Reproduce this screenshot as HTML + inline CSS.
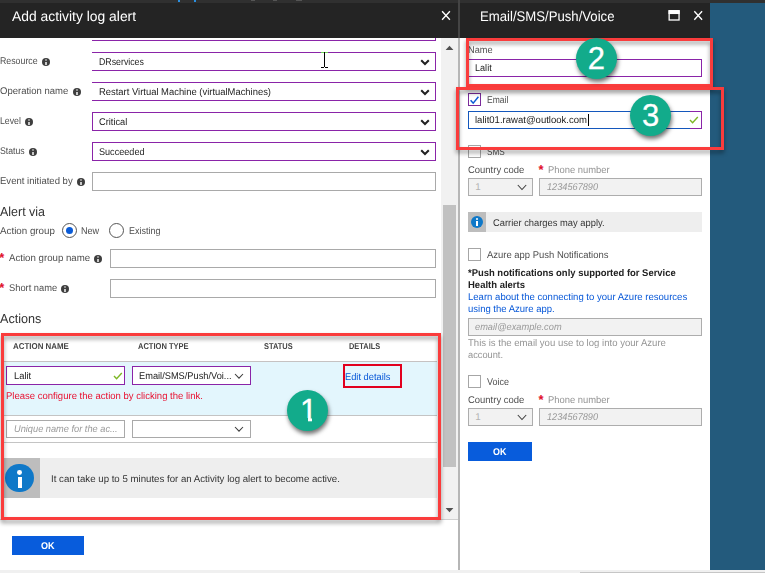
<!DOCTYPE html>
<html lang="en">
<head>
<meta charset="utf-8">
<title>Add activity log alert</title>
<style>
html,body{margin:0;padding:0;}
body{width:765px;height:573px;overflow:hidden;background:#fff;font-family:"Liberation Sans",sans-serif;font-size:10px;color:#333;position:relative;}
#root{position:absolute;left:0;top:0;width:765px;height:573px;overflow:hidden;background:#fff;}
.abs,.t,.box,.ln{position:absolute;}
.t{white-space:nowrap;color:#4e4e4e;transform-origin:0 0;text-rendering:geometricPrecision;}
.box{box-sizing:border-box;border:1px solid #a9a9a9;background:#fff;}
.pur{border-color:#8a24a8;}
.dis{background:#f2f2f2;border-color:#adadad;}
.ph{font-style:italic;color:#9a9a9a;}
.red{color:#e81030;}
.lnk{color:#0657d8;}
.b{font-weight:bold;}
.gray{color:#949494;}
.star{color:#e0102a;}
.cb{position:absolute;box-sizing:border-box;width:13px;height:13px;border:1px solid #a6a6a6;background:#fff;}
.circ{position:absolute;border-radius:50%;background:#12ab8b;box-shadow:1px 3px 4px rgba(0,0,0,.55);}
.num{position:absolute;left:0;width:100%;text-align:center;color:#fff;white-space:nowrap;-webkit-text-stroke:.3px #fff;}
.anno{position:absolute;box-sizing:border-box;border:3px solid #fa3c3c;filter:drop-shadow(0 3px 2px rgba(0,0,0,.4));}
.info{position:absolute;border-radius:50%;background:#3e3e3e;width:8px;height:8px;}
.info i{position:absolute;left:3.05px;width:1.9px;background:rgba(255,255,255,.72);display:block;}
.info i:first-child{background:rgba(255,255,255,.42);}
</style>
</head>
<body>
<div id="root">

<!-- top strip + headers -->
<div class="abs" style="left:0;top:0;width:765px;height:38px;background:#242424;"></div>
<div class="abs" style="left:0;top:0;width:765px;height:3px;background:#303030;"></div>
<div class="abs" style="left:710px;top:3px;width:55px;height:567px;background:#235a7c;"></div>
<div class="abs" style="left:458px;top:38px;width:2px;height:532px;background:#b6b6b6;"></div>
<div class="abs" style="left:458px;top:0;width:2px;height:38px;background:#444;"></div>

<!-- header icons -->
<svg class="abs" style="left:439px;top:8px;" width="14" height="15" viewBox="0 0 14 15"><path d="M3.1 3.3 L10.9 11.8 M10.9 3.3 L3.1 11.8" stroke="#fff" stroke-width="1.35" fill="none"/></svg>
<svg class="abs" style="left:691px;top:8px;" width="14" height="15" viewBox="0 0 14 15"><path d="M3.3 3.3 L11.1 11.8 M11.1 3.3 L3.3 11.8" stroke="#fff" stroke-width="1.35" fill="none"/></svg>
<svg class="abs" style="left:667px;top:9px;" width="15" height="14" viewBox="0 0 15 14"><rect x="2.15" y="1.8" width="9.9" height="9.2" fill="none" stroke="#fff" stroke-width="1.3"/><rect x="1.5" y="1.15" width="11.2" height="3.9" fill="#fff"/></svg>
<div class="abs" style="left:177.7px;top:0;width:2.6px;height:1.5px;background:#2a8fe0;"></div>
<div class="abs" style="left:193.6px;top:0;width:2.8px;height:1.5px;background:#2a8fe0;"></div>
<div class="abs" style="left:251px;top:0;width:4px;height:1.2px;background:#555;"></div>
<div class="abs" style="left:273px;top:0;width:4px;height:1.2px;background:#555;"></div>
<div class="abs" style="left:296px;top:0;width:6px;height:1.2px;background:#555;"></div>

<!-- LEFT PANEL scrollbar -->
<div class="abs" style="left:441px;top:38px;width:17px;height:481px;background:#f1f1f1;"></div>
<div class="abs" style="left:443px;top:205px;width:13px;height:262px;background:#c1c1c1;"></div>
<svg class="abs" style="left:445px;top:45px;" width="9" height="6" viewBox="0 0 9 6"><path d="M0.6 5 L4.5 0.8 L8.4 5 Z" fill="#505050"/></svg>
<svg class="abs" style="left:445px;top:506.9px;" width="9" height="6" viewBox="0 0 9 6"><path d="M0.6 1 L4.5 5.2 L8.4 1 Z" fill="#505050"/></svg>
<div class="abs" style="left:0;top:519px;width:458px;height:1px;background:#d0d0d0;"></div>

<!-- form rows -->
<div class="abs" style="left:92px;top:40px;width:344px;height:1px;background:#8a24a8;"></div>
<div class="abs" style="left:435px;top:38px;width:1px;height:3px;background:#8a24a8;"></div>

<div class="box pur" style="left:92px;top:52px;width:344px;height:19px;border-left:none;"></div>
<div class="box pur" style="left:92px;top:82px;width:344px;height:19px;border-left:none;"></div>
<div class="box pur" style="left:92px;top:112px;width:344px;height:19px;"></div>
<div class="box pur" style="left:92px;top:142px;width:344px;height:19px;"></div>
<div class="box" style="left:92px;top:172px;width:344px;height:19px;"></div>
<!-- bold chevrons -->
<svg class="abs" style="left:420px;top:59px;" width="10" height="7" viewBox="0 0 10 7"><path d="M1.2 1.2 L5 5 L8.8 1.2" stroke="#222" stroke-width="2" fill="none"/></svg>
<svg class="abs" style="left:420px;top:89px;" width="10" height="7" viewBox="0 0 10 7"><path d="M1.2 1.2 L5 5 L8.8 1.2" stroke="#222" stroke-width="2" fill="none"/></svg>
<svg class="abs" style="left:420px;top:119px;" width="10" height="7" viewBox="0 0 10 7"><path d="M1.2 1.2 L5 5 L8.8 1.2" stroke="#222" stroke-width="2" fill="none"/></svg>
<svg class="abs" style="left:420px;top:149px;" width="10" height="7" viewBox="0 0 10 7"><path d="M1.2 1.2 L5 5 L8.8 1.2" stroke="#222" stroke-width="2" fill="none"/></svg>
<!-- info icons -->
<div class="info" style="left:42.1px;top:58px;"><i style="top:1.2px;height:1.9px;"></i><i style="top:4.1px;height:2.5px;"></i></div>
<div class="info" style="left:73.1px;top:88px;"><i style="top:1.2px;height:1.9px;"></i><i style="top:4.1px;height:2.5px;"></i></div>
<div class="info" style="left:25.05px;top:118px;"><i style="top:1.2px;height:1.9px;"></i><i style="top:4.1px;height:2.5px;"></i></div>
<div class="info" style="left:29.1px;top:148px;"><i style="top:1.2px;height:1.9px;"></i><i style="top:4.1px;height:2.5px;"></i></div>
<div class="info" style="left:77.2px;top:178px;"><i style="top:1.2px;height:1.9px;"></i><i style="top:4.1px;height:2.5px;"></i></div>
<div class="info" style="left:94px;top:255px;"><i style="top:1.2px;height:1.9px;"></i><i style="top:4.1px;height:2.5px;"></i></div>
<div class="info" style="left:61.1px;top:285px;"><i style="top:1.2px;height:1.9px;"></i><i style="top:4.1px;height:2.5px;"></i></div>

<!-- radios -->
<div class="abs" style="left:61.8px;top:222.9px;width:15.2px;height:15.2px;box-sizing:border-box;border:1.2px solid #555;border-radius:50%;background:#fff;"></div>
<div class="abs" style="left:65.5px;top:226.6px;width:7.8px;height:7.8px;border-radius:50%;background:#0a5bd6;"></div>
<div class="abs" style="left:109.2px;top:222.9px;width:15.2px;height:15.2px;box-sizing:border-box;border:1.2px solid #555;border-radius:50%;background:#fff;"></div>

<div class="box" style="left:110px;top:249px;width:326px;height:18.5px;"></div>
<div class="box" style="left:110px;top:279px;width:326px;height:18.5px;"></div>

<!-- table -->
<div class="abs" style="left:4px;top:361px;width:433px;height:54px;background:#e3f6fd;"></div>
<div class="abs" style="left:4px;top:361px;width:433px;height:1px;background:#c6c2c2;"></div>
<div class="abs" style="left:4px;top:415px;width:433px;height:1px;background:#c4c4c4;"></div>
<div class="abs" style="left:4px;top:442px;width:433px;height:1px;background:#c4c4c4;"></div>

<div class="box pur" style="left:6px;top:366px;width:119px;height:19px;"></div>
<svg class="abs" style="left:113px;top:372px;" width="10" height="8" viewBox="0 0 10 8"><path d="M1 4 L3.6 6.8 L8.8 1" stroke="#7db724" stroke-width="1.4" fill="none"/></svg>
<div class="box pur" style="left:132px;top:366px;width:119px;height:19px;"></div>
<svg class="abs" style="left:234px;top:373px;" width="10" height="7" viewBox="0 0 10 7"><path d="M1 1 L5 5.2 L9 1" stroke="#3c3c3c" stroke-width="1.05" fill="none"/></svg>
<div class="abs" style="left:343px;top:363.9px;width:59px;height:24px;box-sizing:border-box;border:2.1px solid #e2001e;"></div>

<div class="box" style="left:6px;top:419.5px;width:119px;height:18.5px;"></div>
<div class="box" style="left:132px;top:419.5px;width:119px;height:18.5px;"></div>
<svg class="abs" style="left:234px;top:426px;" width="10" height="7" viewBox="0 0 10 7"><path d="M1 1 L5 5.2 L9 1" stroke="#3c3c3c" stroke-width="1.05" fill="none"/></svg>

<!-- info box -->
<div class="abs" style="left:4px;top:458px;width:433px;height:40px;background:#eeeeee;"></div>
<div class="abs" style="left:4px;top:458px;width:36px;height:40px;background:#bdbdbd;"></div>
<div class="abs" style="left:5.4px;top:464px;width:28.4px;height:28.4px;border-radius:50%;background:#0f78c8;"></div>
<div class="abs" style="left:17.3px;top:470px;width:4.9px;height:4.9px;border-radius:50%;background:#fff;"></div>
<div class="abs" style="left:17.5px;top:476.8px;width:4.5px;height:11px;background:#fff;"></div>

<!-- OK -->
<div class="abs" style="left:12px;top:536px;width:72px;height:19px;background:#085cdc;"></div>

<!-- bottom strip -->
<div class="abs" style="left:0;top:570px;width:765px;height:3px;background:#f0f0f0;"></div>
<div class="abs" style="left:580px;top:571.6px;width:185px;height:1.4px;background:#c6c6c6;"></div>

<!-- RIGHT PANEL shapes -->
<div class="box pur" style="left:468px;top:59px;width:234px;height:18px;"></div>
<div class="cb" style="left:468px;top:93.3px;border-color:#7a2b9a;"></div>
<svg class="abs" style="left:469px;top:94.5px;" width="11" height="11" viewBox="0 0 11 11"><path d="M1.6 5.2 L4.2 8.2 L9.4 1.8" stroke="#0a5bd6" stroke-width="1.5" fill="none"/></svg>
<div class="box" style="left:468px;top:111px;width:234px;height:18px;border-color:#1457bc;"></div>
<div class="abs" style="left:690px;top:111px;width:12px;height:18px;box-sizing:border-box;border:1px solid #8a24a8;border-left:none;"></div>
<div class="abs" style="left:588.2px;top:114px;width:1px;height:11.5px;background:#000;"></div>
<svg class="abs" style="left:689px;top:116px;" width="10" height="8" viewBox="0 0 10 8"><path d="M1 4 L3.6 6.8 L8.8 1" stroke="#7db724" stroke-width="1.4" fill="none"/></svg>

<div class="cb" style="left:468px;top:145.3px;"></div>
<div class="box dis" style="left:468px;top:178px;width:64.5px;height:17.5px;"></div>
<svg class="abs" style="left:517px;top:184px;" width="10" height="7" viewBox="0 0 10 7"><path d="M0.8 1 L5 5.5 L9.2 1" stroke="#3c3c3c" stroke-width="1.05" fill="none"/></svg>
<div class="box dis" style="left:539px;top:178px;width:162.5px;height:17.5px;"></div>

<div class="abs" style="left:468px;top:212px;width:233.5px;height:19.5px;background:#eeeeee;"></div>
<div class="abs" style="left:468px;top:212px;width:17.8px;height:19.5px;background:#bdbdbd;"></div>
<div class="abs" style="left:470.7px;top:216px;width:12.2px;height:12.2px;border-radius:50%;background:#0f78c8;"></div>
<div class="abs" style="left:475.8px;top:218.3px;width:2px;height:2px;border-radius:50%;background:#fff;"></div>
<div class="abs" style="left:475.9px;top:221.1px;width:1.8px;height:4.8px;background:#fff;"></div>

<div class="cb" style="left:468px;top:248.2px;"></div>
<div class="box dis" style="left:468px;top:318.3px;width:233.5px;height:17.5px;"></div>
<div class="cb" style="left:468px;top:375.2px;"></div>
<div class="box dis" style="left:468px;top:408px;width:64.5px;height:17.5px;"></div>
<svg class="abs" style="left:517px;top:414px;" width="10" height="7" viewBox="0 0 10 7"><path d="M0.8 1 L5 5.5 L9.2 1" stroke="#3c3c3c" stroke-width="1.05" fill="none"/></svg>
<div class="box dis" style="left:539px;top:408px;width:162.5px;height:17.5px;"></div>
<div class="abs" style="left:468px;top:442px;width:64px;height:18.5px;background:#085cdc;"></div>

<!-- I-beam mouse cursor -->
<div class="abs" style="left:324px;top:52.4px;width:1px;height:14.8px;background:#000;"></div>
<div class="abs" style="left:321px;top:67px;width:3px;height:1px;background:#000;"></div>
<div class="abs" style="left:325px;top:67px;width:3px;height:1px;background:#000;"></div>
<div class="abs" style="left:321px;top:52px;width:2.8px;height:1px;background:#6fd657;"></div>
<div class="abs" style="left:325.2px;top:52px;width:2.8px;height:1px;background:#6fd657;"></div>

<div class="t" id="h1" style="left:11.9px;top:8px;font-size:14px;line-height:17px;height:17px;transform:scaleX(0.9904);color:#fff;">Add activity log alert</div>
<div class="t" id="h2" style="left:479.8px;top:8px;font-size:14px;line-height:17px;height:17px;transform:scaleX(0.9394);color:#fff;">Email/SMS/Push/Voice</div>
<div class="t" id="l_res" style="left:0px;top:56px;font-size:9.8px;line-height:12px;height:12px;transform:scaleX(0.8966);">Resource</div>
<div class="t" id="v_res" style="left:99.2px;top:57px;font-size:9.8px;line-height:12px;height:12px;transform:scaleX(0.8963);color:#222;">DRservices</div>
<div class="t" id="l_op" style="left:0px;top:86px;font-size:9.8px;line-height:12px;height:12px;transform:scaleX(0.9706);">Operation name</div>
<div class="t" id="v_op" style="left:99.2px;top:87px;font-size:9.8px;line-height:12px;height:12px;transform:scaleX(0.9611);color:#222;">Restart Virtual Machine (virtualMachines)</div>
<div class="t" id="l_lvl" style="left:0px;top:116px;font-size:9.8px;line-height:12px;height:12px;transform:scaleX(0.8923);">Level</div>
<div class="t" id="v_lvl" style="left:99px;top:117px;font-size:9.8px;line-height:12px;height:12px;transform:scaleX(0.9453);color:#222;">Critical</div>
<div class="t" id="l_st" style="left:0px;top:146px;font-size:9.8px;line-height:12px;height:12px;transform:scaleX(0.8891);">Status</div>
<div class="t" id="v_st" style="left:99px;top:147px;font-size:9.8px;line-height:12px;height:12px;transform:scaleX(0.9280);color:#222;">Succeeded</div>
<div class="t" id="l_ev" style="left:0px;top:176px;font-size:9.8px;line-height:12px;height:12px;transform:scaleX(0.9742);">Event initiated by</div>
<div class="t" id="hd_alert" style="left:0px;top:204px;font-size:13px;line-height:16px;height:16px;transform:scaleX(0.9581);color:#333;">Alert via</div>
<div class="t" id="l_ag" style="left:0px;top:226px;font-size:9.8px;line-height:12px;height:12px;transform:scaleX(0.9979);">Action group</div>
<div class="t" id="l_new" style="left:81.3px;top:226px;font-size:9.8px;line-height:12px;height:12px;transform:scaleX(0.9281);">New</div>
<div class="t" id="l_ex" style="left:128.7px;top:226px;font-size:9.8px;line-height:12px;height:12px;transform:scaleX(0.9151);">Existing</div>
<div class="t star b" id="s1" style="left:-0.7px;top:250px;font-size:13px;line-height:16px;height:16px;">*</div>
<div class="t" id="l_agn" style="left:8.8px;top:253px;font-size:9.8px;line-height:12px;height:12px;transform:scaleX(0.9872);">Action group name</div>
<div class="t star b" id="s2" style="left:-0.7px;top:280px;font-size:13px;line-height:16px;height:16px;">*</div>
<div class="t" id="l_sn" style="left:8.8px;top:283px;font-size:9.8px;line-height:12px;height:12px;transform:scaleX(0.9515);">Short name</div>
<div class="t" id="hd_act" style="left:0px;top:311px;font-size:13px;line-height:16px;height:16px;transform:scaleX(0.9686);color:#333;">Actions</div>
<div class="t b" id="th1" style="left:12.6px;top:341px;font-size:8.5px;line-height:10px;height:10px;transform:scaleX(0.9319);color:#444;">ACTION NAME</div>
<div class="t b" id="th2" style="left:138.4px;top:341px;font-size:8.5px;line-height:10px;height:10px;transform:scaleX(0.8853);color:#444;">ACTION TYPE</div>
<div class="t b" id="th3" style="left:263.6px;top:341px;font-size:8.5px;line-height:10px;height:10px;transform:scaleX(0.8763);color:#444;">STATUS</div>
<div class="t b" id="th4" style="left:349.1px;top:341px;font-size:8.5px;line-height:10px;height:10px;transform:scaleX(0.8731);color:#444;">DETAILS</div>
<div class="t" id="v_lalit" style="left:13.6px;top:371px;font-size:9.8px;line-height:12px;height:12px;transform:scaleX(0.9564);color:#222;">Lalit</div>
<div class="t" id="v_type" style="left:139.4px;top:371px;font-size:9.8px;line-height:12px;height:12px;transform:scaleX(0.9447);color:#222;">Email/SMS/Push/Voi...</div>
<div class="t lnk" id="v_edit" style="left:344.9px;top:372px;font-size:9.8px;line-height:12px;height:12px;transform:scaleX(0.9492);">Edit details</div>
<div class="t red" id="v_err" style="left:6.4px;top:391px;font-size:9.8px;line-height:12px;height:12px;transform:scaleX(0.9719);">Please configure the action by clicking the link.</div>
<div class="t ph" id="v_uniq" style="left:13.6px;top:424px;font-size:9.8px;line-height:12px;height:12px;transform:scaleX(0.9426);">Unique name for the ac...</div>
<div class="t" id="v_info" style="left:51.3px;top:474px;font-size:9.8px;line-height:12px;height:12px;transform:scaleX(0.9861);color:#333;">It can take up to 5 minutes for an Activity log alert to become active.</div>
<div class="t b" id="ok1" style="left:41.3px;top:541px;font-size:9.8px;line-height:12px;height:12px;transform:scaleX(0.9250);color:#fff;">OK</div>
<div class="t" id="r_name" style="left:468.4px;top:45px;font-size:9.8px;line-height:12px;height:12px;transform:scaleX(0.9372);">Name</div>
<div class="t" id="r_lalit" style="left:475.3px;top:63px;font-size:9.8px;line-height:12px;height:12px;transform:scaleX(0.9286);color:#222;">Lalit</div>
<div class="t" id="r_email" style="left:486.6px;top:95px;font-size:9.8px;line-height:12px;height:12px;transform:scaleX(0.8694);">Email</div>
<div class="t" id="r_mail" style="left:475.1px;top:115px;font-size:9.8px;line-height:12px;height:12px;transform:scaleX(0.9735);color:#222;">lalit01.rawat@outlook.com</div>
<div class="t" id="r_sms" style="left:486.8px;top:147px;font-size:9.8px;line-height:12px;height:12px;transform:scaleX(0.8383);">SMS</div>
<div class="t" id="r_cc1" style="left:468px;top:165px;font-size:9.8px;line-height:12px;height:12px;transform:scaleX(0.9660);">Country code</div>
<div class="t star b" id="s3" style="left:538.5px;top:162px;font-size:13px;line-height:16px;height:16px;">*</div>
<div class="t gray" id="r_pn1" style="left:548px;top:165px;font-size:9.8px;line-height:12px;height:12px;transform:scaleX(0.9598);">Phone number</div>
<div class="t" id="r_one1" style="left:475.2px;top:182px;font-size:9.8px;line-height:12px;height:12px;color:#b4b4b4;">1</div>
<div class="t ph" id="r_ph1" style="left:546.5px;top:182px;font-size:9.8px;line-height:12px;height:12px;transform:scaleX(0.9376);">1234567890</div>
<div class="t" id="r_carrier" style="left:492.9px;top:218px;font-size:9.8px;line-height:12px;height:12px;transform:scaleX(0.9547);color:#333;">Carrier charges may apply.</div>
<div class="t" id="r_push" style="left:486.6px;top:250px;font-size:9.8px;line-height:12px;height:12px;transform:scaleX(0.9650);">Azure app Push Notifications</div>
<div class="t b" id="r_b1" style="left:468px;top:268px;font-size:9.8px;line-height:12px;height:12px;transform:scaleX(0.9635);color:#222;">*Push notifications only supported for Service</div>
<div class="t b" id="r_b2" style="left:468px;top:280px;font-size:9.8px;line-height:12px;height:12px;transform:scaleX(0.9692);color:#222;">Health alerts</div>
<div class="t lnk" id="r_l1" style="left:468px;top:292px;font-size:9.8px;line-height:12px;height:12px;transform:scaleX(0.9745);">Learn about the connecting to your Azure resources</div>
<div class="t lnk" id="r_l2" style="left:468px;top:304px;font-size:9.8px;line-height:12px;height:12px;transform:scaleX(0.9706);">using the Azure app.</div>
<div class="t ph" id="r_eph" style="left:475px;top:322px;font-size:9.8px;line-height:12px;height:12px;transform:scaleX(0.9452);">email@example.com</div>
<div class="t gray" id="r_g1" style="left:468px;top:338px;font-size:9.8px;line-height:12px;height:12px;transform:scaleX(0.9769);">This is the email you use to log into your Azure</div>
<div class="t gray" id="r_g2" style="left:468px;top:350px;font-size:9.8px;line-height:12px;height:12px;transform:scaleX(0.9447);">account.</div>
<div class="t" id="r_voice" style="left:486.6px;top:377px;font-size:9.8px;line-height:12px;height:12px;transform:scaleX(0.9179);">Voice</div>
<div class="t" id="r_cc2" style="left:468px;top:395px;font-size:9.8px;line-height:12px;height:12px;transform:scaleX(0.9660);">Country code</div>
<div class="t star b" id="s4" style="left:538.5px;top:392px;font-size:13px;line-height:16px;height:16px;">*</div>
<div class="t gray" id="r_pn2" style="left:548px;top:395px;font-size:9.8px;line-height:12px;height:12px;transform:scaleX(0.9598);">Phone number</div>
<div class="t" id="r_one2" style="left:475.2px;top:412px;font-size:9.8px;line-height:12px;height:12px;color:#b4b4b4;">1</div>
<div class="t ph" id="r_ph2" style="left:546.5px;top:412px;font-size:9.8px;line-height:12px;height:12px;transform:scaleX(0.9376);">1234567890</div>
<div class="t b" id="ok2" style="left:493.1px;top:447px;font-size:9.8px;line-height:12px;height:12px;transform:scaleX(0.9114);color:#fff;">OK</div>

<!-- annotations -->
<div class="anno" style="left:1px;top:333px;width:440px;height:187px;"></div>
<div class="anno" style="left:466px;top:38px;width:247px;height:49px;"></div>
<div class="anno" style="left:456.3px;top:86.8px;width:267.7px;height:63.2px;"></div>
<div class="circ" style="left:287.1px;top:389.9px;width:40.9px;height:40.9px;"><div class="num" style="left:1.2px;top:0px;font-size:31px;line-height:41px;">1</div></div>
<div class="abs" style="left:300.5px;top:417.6px;width:7px;height:5px;background:#12ab8b;"></div><div class="abs" style="left:311.6px;top:417.6px;width:7px;height:5px;background:#12ab8b;"></div>
<div class="circ" style="left:575.9px;top:38.3px;width:41.2px;height:41.2px;"><div class="num" style="top:0px;font-size:31px;line-height:41px;">2</div></div>
<div class="circ" style="left:630.1px;top:94.8px;width:41.1px;height:41.1px;"><div class="num" style="top:0px;font-size:31px;line-height:41px;">3</div></div>

</div>
</body>
</html>
